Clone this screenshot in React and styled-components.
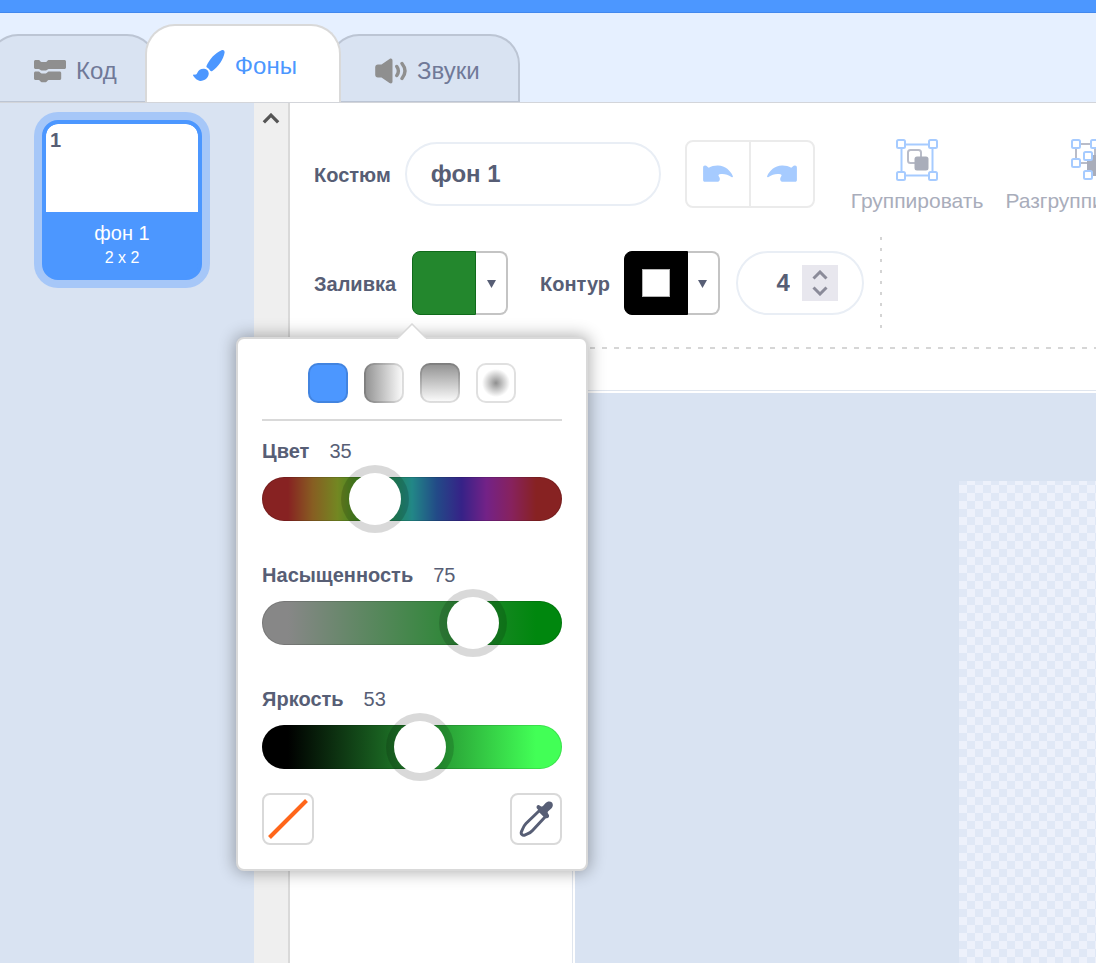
import React, { useState } from "react";
import styled, { createGlobalStyle, css } from "styled-components";

const blue = "#4c97ff";
const ink = "#575e75";
const panel = "#d9e3f2";
const line = "#d9d9d9";

const GlobalStyle = createGlobalStyle`
  *, *::before, *::after { box-sizing: border-box; }
  body {
    margin: 0;
    color: ${ink};
    background: #fff;
    font-family: "Liberation Sans", Arial, sans-serif;
    font-size: 20px;
    overflow: hidden;
  }
  button, input { font: inherit; color: inherit; margin: 0; }
  button { padding: 0; cursor: pointer; }
`;

const Page = styled.div`
  display: flex;
  flex-direction: column;
  height: 100vh;
  overflow: hidden;
`;

const MenuBar = styled.header`
  flex: none;
  height: 13px;
  background: ${blue};
  border-bottom: 1px solid #4288ee;
`;

const TabStrip = styled.nav`
  flex: none;
  display: flex;
  align-items: flex-end;
  height: 90px;
  background: #e6f0ff;
  border-bottom: 1px solid #d3d5da;
`;

const Tab = styled.button`
  display: flex;
  align-items: center;
  justify-content: center;
  gap: 10px;
  flex: none;
  height: 68px;
  margin-left: -12px;
  padding: 4px 38px 0 44px;
  border: 2px solid #bcc5d4;
  border-bottom-width: 1px;
  border-radius: 30px 30px 0 0;
  background: ${panel};
  color: #707998;
  font-size: 24px;
  line-height: 28px;
  ${(p) =>
    p.$active &&
    css`
      position: relative;
      z-index: 1;
      height: 78px;
      padding: 4px 42px 0 46px;
      border-color: ${line};
      border-bottom: 0;
      background: #fff;
      color: ${blue};
    `}
`;

const Workspace = styled.div`
  flex: 1;
  display: flex;
  min-height: 0;
`;

const AssetList = styled.aside`
  flex: none;
  display: flex;
  width: 290px;
  background: ${panel};
  border-right: 2px solid ${line};
`;

const Assets = styled.div`
  flex: 1;
  display: flex;
  flex-direction: column;
  align-items: center;
  padding: 17px 10px 0 0;
`;

const AssetCard = styled.button`
  display: flex;
  flex-direction: column;
  width: 160px;
  height: 160px;
  padding: 0;
  overflow: hidden;
  border: 4px solid ${blue};
  border-radius: 16px;
  background: ${blue};
  box-shadow: 0 0 0 8px #a6c7f8;
  color: #fff;
  text-align: center;
`;

const AssetPreview = styled.span`
  width: 100%;
  height: 88px;
  padding: 4px;
  border-radius: 12px 12px 0 0;
  background: #fff;
  color: ${ink};
  font-size: 20px;
  font-weight: 700;
  line-height: 24px;
  text-align: left;
`;

const AssetName = styled.span`
  width: 100%;
  padding-top: 8px;
  font-size: 20px;
  line-height: 26px;
`;

const AssetSize = styled.span`
  width: 100%;
  font-size: 16px;
  line-height: 24px;
`;

const ScrollTrack = styled.div`
  width: 34px;
  padding-top: 10px;
  background: #efefef;
  text-align: center;
`;

const PlainButton = styled.button`
  display: flex;
  align-items: center;
  justify-content: center;
  width: 100%;
  border: 0;
  background: none;
`;

const Editor = styled.main`
  flex: 1;
  min-width: 0;
  display: flex;
  flex-direction: column;
`;

const Toolbar = styled.div`
  flex: none;
  display: flex;
  flex-direction: column;
  margin-left: 24px;
  padding: 34px 0 18px;
`;

const Row = styled.div`
  display: flex;
  align-items: center;
  height: ${(p) => p.$height}px;
  margin-bottom: ${(p) => p.$below}px;
  > * { flex: none; }
`;

const Label = styled.label`
  margin-right: ${(p) => p.$gap}px;
  padding-top: 2px;
  font-size: 20px;
  font-weight: 700;
  line-height: 24px;
`;

const NameInput = styled.input`
  width: 256px;
  height: 64px;
  padding: 0 24px;
  border: 2px solid #e9eef5;
  border-radius: 32px;
  background: #fff;
  font-size: 24px;
  font-weight: 700;
`;

const HistoryButtons = styled.div`
  display: flex;
  width: 130px;
  height: 68px;
  margin: 0 36px 0 24px;
  border: 2px solid #ebebeb;
  border-radius: 8px;
  button + button { border-left: 2px solid #ebebeb; }
`;

const ToolButton = styled.button`
  display: flex;
  flex-direction: column;
  align-items: center;
  gap: 8px;
  margin-right: 22px;
  padding-top: 4px;
  border: 0;
  background: none;
  color: #a9adbb;
  font-size: 21px;
  line-height: 24px;
`;

const Picker = styled.div`
  position: relative;
  margin-right: ${(p) => p.$gap}px;
`;

const ColorButton = styled.button`
  display: flex;
  width: 96px;
  height: 64px;
  border: 0;
  background: none;
`;

const Swatch = styled.span`
  display: flex;
  align-items: center;
  justify-content: center;
  width: 64px;
  height: 64px;
  border: 1px solid ${(p) => p.$edge};
  border-radius: 8px 0 0 8px;
  background: ${(p) => p.$color};
`;

const OutlineHole = styled.span`
  width: 28px;
  height: 28px;
  border: 1px solid #b5b5b5;
  background: #fff;
`;

const Caret = styled.span`
  flex: 1;
  height: 64px;
  display: flex;
  align-items: center;
  justify-content: center;
  padding-top: 2px;
  border: 2px solid #c4c4c4;
  border-left: 0;
  border-radius: 0 8px 8px 0;
  background: #fff;
`;

const WidthField = styled.div`
  display: flex;
  align-items: center;
  justify-content: flex-end;
  width: 128px;
  height: 64px;
  margin-right: 16px;
  padding-right: 24px;
  border: 2px solid #e9eef5;
  border-radius: 32px;
`;

const WidthInput = styled.input`
  width: 40px;
  border: 0;
  padding: 0 12px 0 0;
  background: none;
  font-size: 24px;
  font-weight: 700;
  text-align: right;
  appearance: textfield;
  outline: 0;
  &::-webkit-inner-spin-button { appearance: none; margin: 0; }
`;

const Stepper = styled.div`
  display: flex;
  flex-direction: column;
  justify-content: center;
  gap: 6px;
  width: 36px;
  height: 36px;
  background: #e8e7ee;
`;

const VerticalRule = styled.div`
  width: 2px;
  height: 92px;
  background: repeating-linear-gradient(#d4d4d4 0 3px, transparent 3px 11px);
`;

const HorizontalRule = styled.div`
  height: 2px;
  background: repeating-linear-gradient(to right, #d6d6d6 0 5px, transparent 5px 12px);
`;

const Popover = styled.div`
  position: absolute;
  z-index: 2;
  top: calc(100% + 22px);
  left: 0;
  width: 352px;
  padding: 24px;
  transform: translateX(-50%);
  border: 2px solid ${line};
  border-radius: 8px;
  background: #fff;
  box-shadow: 0 0 16px 2px rgba(0, 0, 0, 0.3);
`;

const PopoverArrow = styled.svg`
  position: absolute;
  top: -16px;
  left: calc(50% - 14px);
`;

const FillTypes = styled.div`
  display: flex;
  justify-content: center;
  gap: 16px;
  padding-bottom: 16px;
  border-bottom: 2px solid ${line};
`;

const FillType = styled.button`
  width: 40px;
  height: 40px;
  border: 2px solid rgba(0, 0, 0, 0.12);
  border-radius: 10px;
  background: ${(p) => p.$fill};
  background-origin: border-box;
`;

const SliderGroup = styled.div`
  display: flex;
  flex-direction: column;
  gap: 40px;
  padding: 16px 0 24px;
`;

const SliderHead = styled.div`
  display: flex;
  gap: 20px;
  margin-bottom: 12px;
  font-size: 20px;
  line-height: 28px;
  label { font-weight: 700; }
`;

const Range = styled.input`
  display: block;
  width: 100%;
  height: 44px;
  border-radius: 22px;
  appearance: none;
  outline: 0;
  background: linear-gradient(to right, ${(p) => p.$stops});
  box-shadow: inset 0 0 0 1px rgba(0, 0, 0, 0.12);
  &::-webkit-slider-thumb {
    appearance: none;
    width: 52px;
    height: 52px;
    border-radius: 50%;
    background: #fff;
    box-shadow: 0 0 0 8px rgba(0, 0, 0, 0.15);
    cursor: pointer;
  }
`;

const PopoverActions = styled.div`
  display: flex;
  justify-content: space-between;
`;

const SquareButton = styled.button`
  display: flex;
  align-items: center;
  justify-content: center;
  width: 52px;
  height: 52px;
  border: 2px solid ${line};
  border-radius: 8px;
  background: #fff;
`;

const CanvasRow = styled.div`
  flex: 1;
  display: flex;
  min-height: 0;
  margin-top: 23px;
  padding-left: 282px;
`;

const CanvasFrame = styled.section`
  flex: 1;
  display: flex;
  padding: 2px 0 0 2px;
  border: 1px solid #dfe5ee;
  border-width: 1px 0 0 1px;
`;

const Canvas = styled.div`
  flex: 1;
  display: flex;
  padding: 88px 0 0 384px;
  background: ${panel};
`;

const Stage = styled.div`
  flex: 1;
  background: conic-gradient(#edf1fb 25%, #e0e8f6 0 50%, #edf1fb 0 75%, #e0e8f6 0) 0 -4px / 16px 16px;
`;

const CodeIcon = () => (
  <svg width="32" height="24" viewBox="0 0 32 24" fill="#8f8f8f" aria-hidden="true">
    <path d="M1.6 1h3.2c1 0 1.6 2 2.8 2h4.2c1.2 0 1.800-2 2.800-2h15.800c.9 0 1.600.6 1.600 1.500v6c0 .9-.7 1.500-1.600 1.500H14.800c-1.200 0-1.800 1.600-3 1.600H7.600c-1.200 0-1.800-1.600-3-1.600h-3C.7 10 0 9.400 0 8.500v-6C0 1.600.7 1 1.600 1z" />
    <path d="M1.600 12.600h3c1.200 0 1.800 1.800 3 1.800h4.200c1.200 0 1.800-1.800 3-1.800h10.800c.9 0 1.600.6 1.600 1.500v5.400c0 .9-.7 1.500-1.600 1.500H14.800c-1.200 0-1.800 2.200-3 2.200H7.600c-1.200 0-1.800-2.200-3-2.200h-3C.7 21 0 20.400 0 19.500v-5.400c0-.9.7-1.500 1.600-1.500z" />
  </svg>
);

const BrushIcon = () => (
  <svg width="32" height="32" viewBox="0 0 32 32" fill={blue} aria-hidden="true">
    <path d="M28.500.3c2-.8 3.500.6 3 2.800C30.500 9 25.500 17.200 19.300 21c-1 .6-1.800.3-2.400-.7-.7-1.200-1.500-2-2.500-2.500-1-.5-1.300-1.300-.7-2.300C16.500 9.500 22 3 28.500.3z" />
    <path d="M11.300 18.800c2.900.2 4.700 2.600 4.400 5.300-.5 4.400-4.300 7-8.700 6.800C4.500 30.700 1.700 28.300.2 25.800c-.4-.8 0-1.300.8-1.200 2.200.2 2.700-.5 3.500-2.200 1-2.300 3.500-3.900 6.800-3.600z" />
  </svg>
);

const SoundIcon = () => (
  <svg width="32" height="26" viewBox="0 0 32 26" aria-hidden="true">
    <path fill="#8f8f8f" d="M3 6.500h3.500L14.500 1c1.500-1 3-.3 3 1.500v21c0 1.800-1.500 2.500-3 1.500l-8-5.500H3c-1.800 0-2.800-1.200-2.800-2.800V9.300C.2 7.700 1.200 6.500 3 6.500z" />
    <path fill="none" stroke="#8f8f8f" strokeWidth="3.400" strokeLinecap="round" d="M21.800 8.500q3.200 4.500 0 9M27 5.500q6 7.500 0 15" />
  </svg>
);

const UndoIcon = ({ flip }) => (
  <svg width="30" height="18" viewBox="0 0 30 18" fill="#a6cbff" aria-hidden="true">
    <path transform={flip ? "matrix(-1 0 0 1 30 0)" : undefined} d="M2 .5C3.700.4 4.800 2.200 5.800 2.800 8.400 1.100 11.700.400 15 .5c7.300.3 12.500 5 14.900 10.700.3.9-.5 1.500-1.400.9C24.500 9 20.500 8.500 16.500 9.200c-1.300.3-1.300 1.300-.6 2.200 1 1.400 1.200 2.700.6 4.200-.4.9-1.200 1.200-2.200 1.200H1.900C.7 16.800.1 16.100.1 15V2.400C.1 1.300.8.5 2 .5z" />
  </svg>
);

const Handle = ({ x, y }) => (
  <rect x={x} y={y} width="8" height="8" rx="1.500" fill="#fff" stroke="#a6cbff" strokeWidth="2" />
);

const GroupIcon = () => (
  <svg width="42" height="42" viewBox="0 0 42 42" aria-hidden="true">
    <rect x="5.500" y="5.500" width="31" height="31" fill="none" stroke="#a6cbff" strokeWidth="2" />
    <Handle x={1} y={1} />
    <Handle x={33} y={1} />
    <Handle x={1} y={33} />
    <Handle x={33} y={33} />
    <rect x="12" y="11" width="13" height="13" rx="2.500" fill="#fff" stroke="#b9bcc8" strokeWidth="2" />
    <rect x="18.500" y="17.500" width="14" height="14" rx="2.500" fill="#a9adba" />
  </svg>
);

const UngroupIcon = () => (
  <svg width="50" height="42" viewBox="-8 0 50 42" aria-hidden="true">
    <rect x="5" y="5" width="19" height="19" fill="#fff" stroke="#b9bcc8" strokeWidth="2" />
    <Handle x={1} y={1} />
    <Handle x={20} y={1} />
    <Handle x={1} y={20} />
    <rect x="16" y="16" width="21" height="21" fill="#a9adba" />
    <Handle x={13} y={13} />
    <Handle x={33} y={13} />
    <Handle x={13} y={32} />
    <Handle x={33} y={32} />
  </svg>
);

const CaretIcon = () => (
  <svg width="9" height="8" viewBox="0 0 9 8" fill={ink} aria-hidden="true">
    <path d="M0 0h9L4.500 8z" />
  </svg>
);

const Chevron = ({ down, width = 16, color = "#8b8b99" }) => (
  <svg width={width} height={width / 2 + 2} viewBox="0 0 16 10" fill="none" stroke={color} strokeWidth="3" aria-hidden="true">
    <path d={down ? "M1.500 1.500 8 8l6.500-6.500" : "M1.500 8.500 8 2l6.500 6.500"} />
  </svg>
);

const NoColorIcon = () => (
  <svg width="40" height="40" viewBox="0 0 40 40" aria-hidden="true">
    <path d="M1.500 38.500 38.500 1.500" stroke="#ff661a" strokeWidth="4" />
  </svg>
);

const DropperIcon = () => (
  <svg width="34" height="36" viewBox="0 0 34 36" aria-hidden="true">
    <path fill="#fff" stroke={ink} strokeWidth="3" strokeLinejoin="round" d="M20.500 9.500 7 22.500C4.500 25 3.800 28 2.500 30.500c-1 2.500 1 4.500 3.500 3.500 2.500-1.200 5-1.500 7.500-4.500L26.500 15.500z" />
    <path fill={ink} d="M17.800 7.200c-.8-1.700.5-3.500 2.400-3l2 1.200c.8.3 1.500.1 2-.6l2.200-2.600c2-2.200 5-2.400 6.600-.6 1.400 1.800 1 4.500-1 6.200l-2.800 2.500c-.6.6-.7 1.200-.3 2l1 1.800c.7 1.900-.8 3.600-2.700 3.100l-1.700-.8z" />
  </svg>
);

const edge = "26px";
const hueStops = [
  "135,34,34", "135,94,34", "115,135,34", "54,135,34", "34,135,74", "34,135,135",
  "34,74,135", "54,34,135", "115,34,135", "135,34,94", "135,34,34",
]
  .map((rgb, i) => `rgb(${rgb}) calc(${edge} + (100% - 52px) * ${i} / 10)`)
  .join(", ");

const sliders = [
  { id: "hue", label: "Цвет", value: 35, stops: hueStops },
  { id: "saturation", label: "Насыщенность", value: 74.5, stops: `#878787 ${edge}, #00870e calc(100% - ${edge})` },
  { id: "brightness", label: "Яркость", value: 53, stops: `#000 ${edge}, #42ff56 calc(100% - ${edge})` },
];

const fillTypes = [
  { name: "Сплошной", fill: blue },
  { name: "Горизонтальный", fill: "linear-gradient(to right, #8f8f8f, #fff)" },
  { name: "Вертикальный", fill: "linear-gradient(#8f8f8f, #fff)" },
  { name: "Радиальный", fill: "radial-gradient(circle, #8f8f8f 0, #fff 14px)" },
];

function ColorSlider({ id, label, value, stops }) {
  const [current, setCurrent] = useState(value);
  return (
    <div>
      <SliderHead>
        <label htmlFor={id}>{label}</label>
        <output htmlFor={id}>{Math.round(current)}</output>
      </SliderHead>
      <Range
        id={id}
        type="range"
        min="0"
        max="100"
        step="0.5"
        value={current}
        $stops={stops}
        onChange={(e) => setCurrent(Number(e.target.value))}
      />
    </div>
  );
}

export default function App() {
  const [width, setWidth] = useState(4);
  return (
    <Page>
      <GlobalStyle />
      <MenuBar />
      <TabStrip>
        <Tab><CodeIcon />Код</Tab>
        <Tab $active><BrushIcon />Фоны</Tab>
        <Tab><SoundIcon />Звуки</Tab>
      </TabStrip>
      <Workspace>
        <AssetList>
          <Assets>
            <AssetCard>
              <AssetPreview>1</AssetPreview>
              <AssetName>фон 1</AssetName>
              <AssetSize>2 x 2</AssetSize>
            </AssetCard>
          </Assets>
          <ScrollTrack>
            <PlainButton aria-label="Вверх"><Chevron width={18} color="#555" /></PlainButton>
          </ScrollTrack>
        </AssetList>
        <Editor>
          <Toolbar>
            <Row $height={74} $below={26}>
              <Label htmlFor="costume" $gap={14}>Костюм</Label>
              <NameInput id="costume" defaultValue="фон 1" />
              <HistoryButtons>
                <PlainButton aria-label="Отменить"><UndoIcon /></PlainButton>
                <PlainButton aria-label="Вернуть"><UndoIcon flip /></PlainButton>
              </HistoryButtons>
              <ToolButton><GroupIcon />Группировать</ToolButton>
              <ToolButton><UngroupIcon />Разгруппировать</ToolButton>
            </Row>
            <Row $height={92} $below={18}>
              <Label htmlFor="fill" $gap={16}>Заливка</Label>
              <Picker $gap={32}>
                <ColorButton id="fill">
                  <Swatch $color="#23872d" $edge="#0f6a1a" />
                  <Caret><CaretIcon /></Caret>
                </ColorButton>
                <Popover>
                  <PopoverArrow width="28" height="16" viewBox="0 0 28 16" aria-hidden="true">
                    <path d="M0 15 14 1l14 14v1H0z" fill="#fff" />
                    <path d="M0 15 14 1l14 14" fill="none" stroke={line} strokeWidth="1.500" />
                  </PopoverArrow>
                  <FillTypes>
                    {fillTypes.map((t) => (
                      <FillType key={t.name} aria-label={t.name} $fill={t.fill} />
                    ))}
                  </FillTypes>
                  <SliderGroup>
                    {sliders.map((s) => <ColorSlider key={s.id} {...s} />)}
                  </SliderGroup>
                  <PopoverActions>
                    <SquareButton aria-label="Без цвета"><NoColorIcon /></SquareButton>
                    <SquareButton aria-label="Пипетка"><DropperIcon /></SquareButton>
                  </PopoverActions>
                </Popover>
              </Picker>
              <Label htmlFor="outline" $gap={14}>Контур</Label>
              <Picker $gap={16}>
                <ColorButton id="outline">
                  <Swatch $color="#000" $edge="#000"><OutlineHole /></Swatch>
                  <Caret><CaretIcon /></Caret>
                </ColorButton>
              </Picker>
              <WidthField>
                <WidthInput
                  type="number"
                  aria-label="Толщина контура"
                  value={width}
                  onChange={(e) => setWidth(Number(e.target.value))}
                />
                <Stepper>
                  <PlainButton aria-label="Больше" onClick={() => setWidth(width + 1)}><Chevron /></PlainButton>
                  <PlainButton aria-label="Меньше" onClick={() => setWidth(width - 1)}><Chevron down /></PlainButton>
                </Stepper>
              </WidthField>
              <VerticalRule />
            </Row>
            <HorizontalRule />
          </Toolbar>
          <CanvasRow>
            <CanvasFrame>
              <Canvas><Stage /></Canvas>
            </CanvasFrame>
          </CanvasRow>
        </Editor>
      </Workspace>
    </Page>
  );
}
